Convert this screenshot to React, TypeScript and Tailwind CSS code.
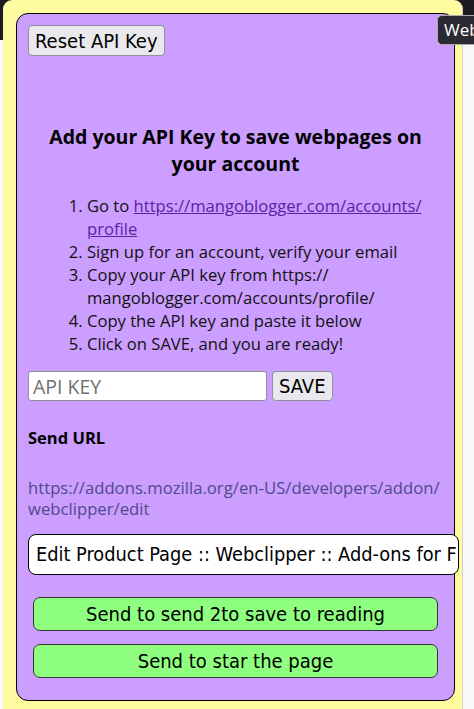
export default function App() {
  return (
    <div className="relative h-[709px] w-[474px] overflow-hidden bg-[linear-gradient(to_bottom,#1c1b22_0_40px,#f9f9fb_40px)] font-['Open_Sans',sans-serif]">
      <div className="ml-[3px] h-[709px] w-[460px] rounded-t-[9px] border-r border-[#d0d0d0] bg-[#fffb9f] px-[13px] pt-[13px]">
        <div className="w-[439px] rounded-[12px] border border-black bg-[#cc9eff] px-[11px] pt-[11px] pb-[22px]">
          <button className="h-[31px] rounded-[4px] border border-[#8f8f9d] bg-[#e9e9ed] px-[6px] font-['DejaVu_Sans_Condensed',sans-serif] text-[20px] leading-none text-black">
            Reset API Key
          </button>

          <h2 className="mt-[67px] px-[14px] text-center text-[19.5px] leading-[27px] font-bold text-black">
            Add your API Key to save webpages on your account
          </h2>

          <ol className="mt-[17px] list-decimal pl-[59px] text-[16.6px] leading-[23px] text-[#111]">
            <li>
              Go to{" "}
              <a className="text-[#5b22a6] underline" href="#">
                https://<wbr />mangoblogger.com/<wbr />accounts/<wbr />profile
              </a>
            </li>
            <li>Sign up for an account, verify your email</li>
            <li>
              Copy your API key from https://<wbr />mangoblogger.com/<wbr />accounts/<wbr />profile/
            </li>
            <li>Copy the API key and paste it below</li>
            <li>Click on SAVE, and you are ready!</li>
          </ol>

          <div className="mt-[16px] flex gap-[5px]">
            <input
              className="h-[30px] w-[239px] rounded-[3px] border border-[#8f8f9d] bg-white px-[4px] text-[19.5px] placeholder:text-[#707070]"
              placeholder="API KEY"
            />
            <button className="h-[30px] rounded-[4px] border border-[#8f8f9d] bg-[#e9e9ed] px-[6px] font-['DejaVu_Sans_Condensed',sans-serif] text-[20px] leading-none text-black">
              SAVE
            </button>
          </div>

          <p className="mt-[25px] text-[16.5px] font-bold text-black">Send URL</p>

          <p className="mt-[26px] text-[16.7px] leading-[21px] text-[#4f4a8c]">
            https://<wbr />addons.mozilla.org/<wbr />en&#8209;US/<wbr />developers/<wbr />addon/<wbr />webclipper/<wbr />edit
          </p>

          <input
            readOnly
            value="Edit Product Page :: Webclipper :: Add-ons for Firefox"
            className="mt-[15px] block h-[41px] w-[431px] rounded-[8px] border border-black bg-white pr-[2px] pl-[7px] font-['DejaVu_Sans_Condensed',sans-serif] text-[19.8px] text-black outline-none"
          />

          <div className="mt-[22px] flex flex-col gap-[13px] px-[5px]">
            <button className="h-[34px] w-[405px] rounded-[7px] border border-[#333] bg-[#8fff80] font-['DejaVu_Sans_Condensed',sans-serif] text-[20px] text-black">
              Send to send 2to save to reading
            </button>
            <button className="h-[34px] w-[405px] rounded-[7px] border border-[#333] bg-[#8fff80] font-['DejaVu_Sans_Condensed',sans-serif] text-[20px] text-black">
              Send to star the page
            </button>
          </div>
        </div>
      </div>

      <div className="absolute top-[15px] left-[437px] h-[30px] w-[40px] rounded-l-[5px] border border-[#aaa] bg-[#2b2a33] pl-[6px] text-[17px] leading-[28px] text-white">
        Web
      </div>
    </div>
  );
}
